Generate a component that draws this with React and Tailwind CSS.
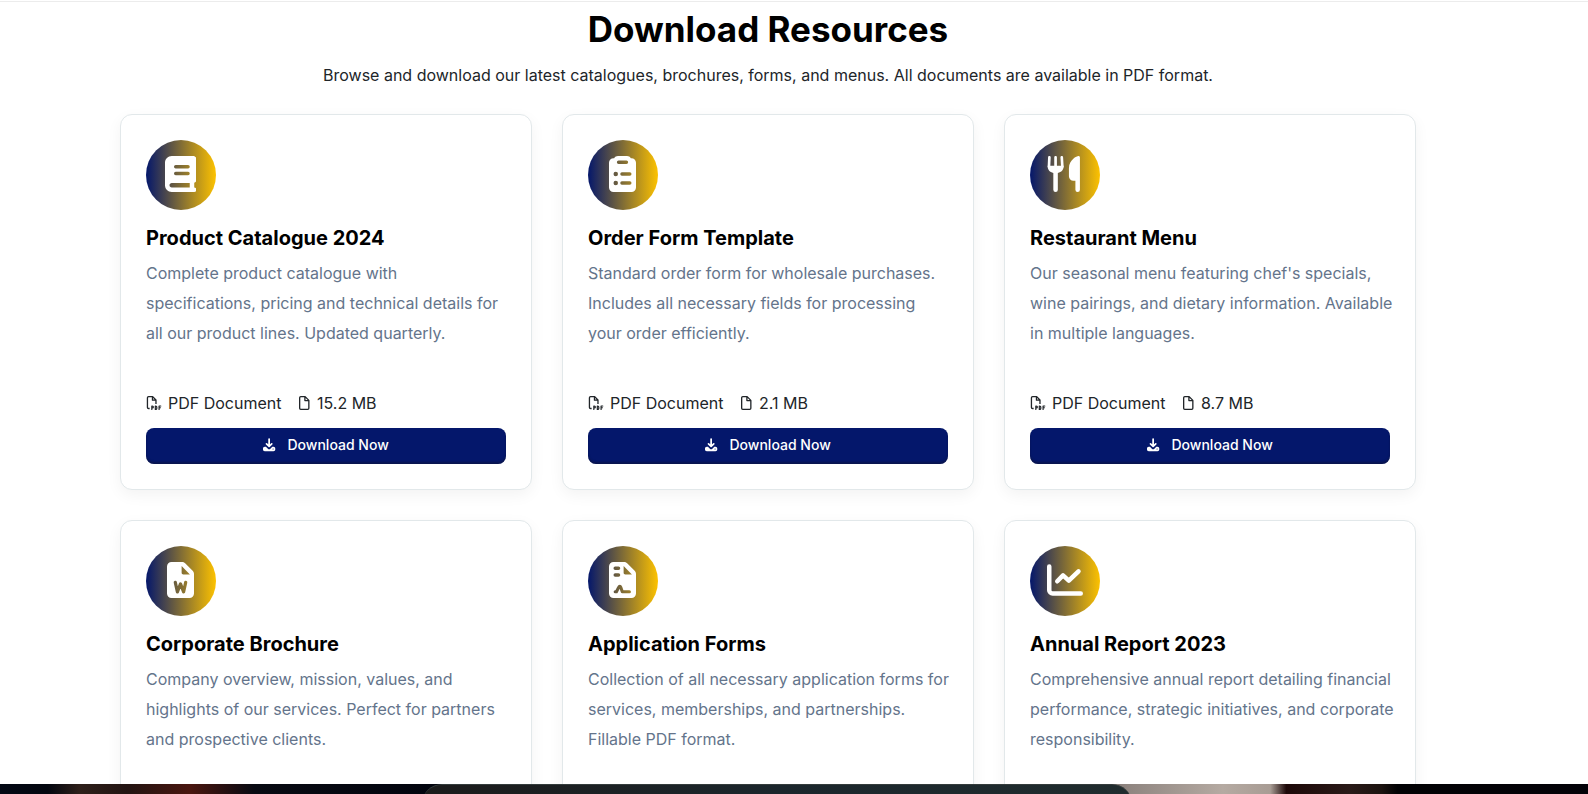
import clsx from "clsx";

const BookIcon = (props) => (
    <svg viewBox="0 0 448 512" fill="currentColor" {...props}>
        <path fillRule="evenodd" d="M96 0C43 0 0 43 0 96V416c0 53 43 96 96 96H416c17.700 0 32-14.300 32-32s-14.300-32-32-32V382c18.600-6.600 32-24.400 32-46V48c0-26.500-21.500-48-48-48H96ZM352 384v64H96c-17.700 0-32-14.300-32-32s14.300-32 32-32H352ZM152 128a24 24 0 0 0 0 48H328a24 24 0 0 0 0-48H152Zm0 96a24 24 0 0 0 0 48H328a24 24 0 0 0 0-48H152Z" />
    </svg>
);

const ClipboardIcon = (props) => (
    <svg viewBox="0 0 384 512" fill="currentColor" {...props}>
        <path fillRule="evenodd" d="M311 32h9c35 0 64 29 64 64V448c0 35-29 64-64 64H64c-35 0-64-29-64-64V96c0-35 29-64 64-64h9C84 13 105 0 128 0H256c23 0 44 13 55 32ZM136 64a24 24 0 0 0 0 48H248a24 24 0 0 0 0-48H136ZM96 224a32 32 0 0 0 0 64a32 32 0 0 0 0-64Zm88 8a24 24 0 0 0 0 48H296a24 24 0 0 0 0-48H184ZM96 352a32 32 0 0 0 0 64a32 32 0 0 0 0-64Zm88 8a24 24 0 0 0 0 48H296a24 24 0 0 0 0-48H184Z" />
    </svg>
);

const UtensilsIcon = (props) => (
    <svg viewBox="0 0 512 512" fill="currentColor" {...props}>
        <path d="M34 18L28 150M122 18V150M210 18L218 150" fill="none" stroke="currentColor" strokeWidth="38" strokeLinecap="round" />
        <path d="M10 140H236v14c0 42-30 78-82 88V480a32 32 0 0 1-64 0V242C40 232 10 196 10 154Z" />
        <path d="M448 0C424 0 312 52 312 176V288c0 35 29 64 64 64h28V480a32 32 0 0 0 64 0V20c0-11-9-20-20-20Z" />
    </svg>
);

const WordIcon = (props) => (
    <svg viewBox="0 0 384 512" {...props}>
        <mask id="word-mark" maskUnits="userSpaceOnUse" x="0" y="0" width="384" height="512">
            <path fill="#fff" d="M0 0H384V512H0Z" />
            <path d="M118 290l30 134 44-112 44 112 30-134" fill="none" stroke="#000" strokeWidth="46" strokeLinecap="round" strokeLinejoin="round" />
        </mask>
        <path mask="url(#word-mark)" fill="currentColor" fillRule="evenodd" d="M64 0H213c17 0 33 7 45 19l107 107c12 12 19 28 19 45V448c0 35-29 64-64 64H64c-35 0-64-29-64-64V64C0 29 29 0 64 0ZM208 58V152c0 13 11 24 24 24h94L208 58Z" />
    </svg>
);

const ContractIcon = (props) => (
    <svg viewBox="0 0 384 512" {...props}>
        <mask id="signature" maskUnits="userSpaceOnUse" x="0" y="0" width="384" height="512">
            <path fill="#fff" d="M0 0H384V512H0Z" />
            <path d="M88 424h18l33-66c8-18 22-16 28 0l22 66H290" fill="none" stroke="#000" strokeWidth="44" strokeLinecap="round" strokeLinejoin="round" />
        </mask>
        <path mask="url(#signature)" fill="currentColor" fillRule="evenodd" d="M64 0H213c17 0 33 7 45 19l107 107c12 12 19 28 19 45V448c0 35-29 64-64 64H64c-35 0-64-29-64-64V64C0 29 29 0 64 0ZM208 58V152c0 13 11 24 24 24h94L208 58ZM88 64a24 24 0 0 0 0 48h48a24 24 0 0 0 0-48H88Zm0 96a24 24 0 0 0 0 48h48a24 24 0 0 0 0-48H88Z" />
    </svg>
);

const ChartIcon = (props) => (
    <svg viewBox="0 0 512 512" fill="none" stroke="currentColor" strokeWidth="64" strokeLinecap="round" strokeLinejoin="round" {...props}>
        <path d="M32 64V400a48 48 0 0 0 48 48H480M146 274l82-84 82 76 138-134" />
    </svg>
);

const PdfIcon = (props) => (
    <svg viewBox="0 0 576 512" fill="none" stroke="currentColor" strokeWidth="48" strokeLinejoin="round" {...props}>
        <path d="M128 456H88a40 40 0 0 1-40-40V64a40 40 0 0 1 40-40H240L360 144V288M232 24v128H360" />
        <path strokeWidth="44" strokeLinecap="round" d="M208 490V366h22a34 34 0 0 1 0 70h-22M336 366v124h14c28 0 40-14 40-36v-52c0-22-12-36-40-36ZM536 366H474V490M474 430h48" />
    </svg>
);

const FileIcon = (props) => (
    <svg viewBox="0 0 384 512" fill="none" stroke="currentColor" strokeWidth="48" strokeLinejoin="round" {...props}>
        <path d="M64 24H224L360 160V448a40 40 0 0 1-40 40H64a40 40 0 0 1-40-40V64a40 40 0 0 1 40-40ZM216 24v144H360" />
    </svg>
);

const DownloadIcon = (props) => (
    <svg viewBox="0 0 448 512" fill="currentColor" {...props}>
        <path d="M224 40V300M128 214L224 306 320 214" fill="none" stroke="currentColor" strokeWidth="64" strokeLinecap="round" strokeLinejoin="round" />
        <path fillRule="evenodd" d="M64 320h44l71 71c25 25 65 25 90 0l71-71h44c35 0 64 29 64 64v32c0 35-29 64-64 64H64c-35 0-64-29-64-64v-32c0-35 29-64 64-64ZM368 382a20 20 0 0 0 0 40a20 20 0 0 0 0-40Z" />
    </svg>
);

const resources = [
    {
        title: "Product Catalogue 2024",
        description: "Complete product catalogue with specifications, pricing and technical details for all our product lines. Updated quarterly.",
        size: "15.2 MB",
        icon: BookIcon,
    },
    {
        title: "Order Form Template",
        description: "Standard order form for wholesale purchases. Includes all necessary fields for processing your order efficiently.",
        size: "2.1 MB",
        icon: ClipboardIcon,
    },
    {
        title: "Restaurant Menu",
        description: "Our seasonal menu featuring chef's specials, wine pairings, and dietary information. Available in multiple languages.",
        size: "8.7 MB",
        icon: UtensilsIcon,
    },
    {
        title: "Corporate Brochure",
        description: "Company overview, mission, values, and highlights of our services. Perfect for partners and prospective clients.",
        icon: WordIcon,
    },
    {
        title: "Application Forms",
        description: "Collection of all necessary application forms for services, memberships, and partnerships. Fillable PDF format.",
        icon: ContractIcon,
    },
    {
        title: "Annual Report 2023",
        description: "Comprehensive annual report detailing financial performance, strategic initiatives, and corporate responsibility.",
        icon: ChartIcon,
    },
];

function ResourceCard({ resource }) {
    const Icon = resource.icon;

    return (
        <article
            className={clsx(
                "rounded-xl border border-[#e2e8ea] bg-white px-[25px] pt-[25px] shadow-[0_5px_15px_rgba(0,0,0,0.05)]",
                resource.size ? "pb-[25px]" : "pb-16"
            )}
        >
            <div className="flex size-[70px] items-center justify-center rounded-full bg-[linear-gradient(90deg,#04176b,#fdc200)] pr-px pb-0.5 text-white">
                <Icon className="h-9 w-auto" aria-hidden="true" />
            </div>
            <h2 className="mt-4 text-xl leading-6 font-bold text-black">{resource.title}</h2>
            <p className="-mr-1 mt-2 text-base leading-[30px] text-[#64748b]">{resource.description}</p>
            {resource.size && (
                <>
                    <div className="mt-[43px] flex gap-[18px] leading-6 text-[#212529]">
                        <span className="flex items-center gap-[6px]">
                            <PdfIcon className="h-[14px] w-4" aria-hidden="true" />
                            PDF Document
                        </span>
                        <span className="flex items-center gap-[7px]">
                            <FileIcon className="h-[14px] w-auto" aria-hidden="true" />
                            {resource.size}
                        </span>
                    </div>
                    <button type="button" className="mt-[13px] flex h-9 w-full items-center justify-center gap-3 rounded-lg bg-[#04176b] pb-0.5 text-sm font-medium text-white shadow-[inset_0_-2px_2px_rgba(16,20,50,0.5)]">
                        <DownloadIcon className="h-[14px] w-auto" aria-hidden="true" />
                        Download Now
                    </button>
                </>
            )}
        </article>
    );
}

export default function App() {
    return (
        <div className="flex h-screen flex-col overflow-hidden bg-white pt-px font-['Inter',sans-serif]">
            <main className="min-h-0 flex-1 overflow-hidden border-t border-[#ececec] pr-[52px]">
                <div className="mx-auto max-w-[1320px] px-3">
                    <header className="pt-[5px] text-center">
                        <h1 className="text-[35px] leading-[44px] font-bold text-black">Download Resources</h1>
                        <p className="mt-3 text-base leading-6 text-[#212529]">
                            Browse and download our latest catalogues, brochures, forms, and menus. All documents are available in PDF format.
                        </p>
                    </header>
                    <div className="mt-[27px] grid grid-cols-3 gap-[30px]">
                        {resources.map((resource) => (
                            <ResourceCard key={resource.title} resource={resource} />
                        ))}
                    </div>
                </div>
            </main>
            <div className="flex h-[10px] shrink-0 overflow-hidden bg-[linear-gradient(90deg,#030814_0%,#03060f_3%,#2e1f1a_5%,#231412_8%,#4a160f_12%,#080a12_16%,#02040e_27%,#02040e_60%,#8f8580_71%,#b5aaa2_77%,#a89c94_80%,#1d0808_81%,#2a1a18_85%,#1c1310_87%,#020204_88%,#030208_100%)]">
                <div className="ml-[26.6%] h-10 w-[44.7%] rounded-t-[20px] border-t border-[#343c3c] bg-linear-to-r from-[#1b1b1b] via-[#1b262c] to-[#202c2e]" />
            </div>
        </div>
    );
}
